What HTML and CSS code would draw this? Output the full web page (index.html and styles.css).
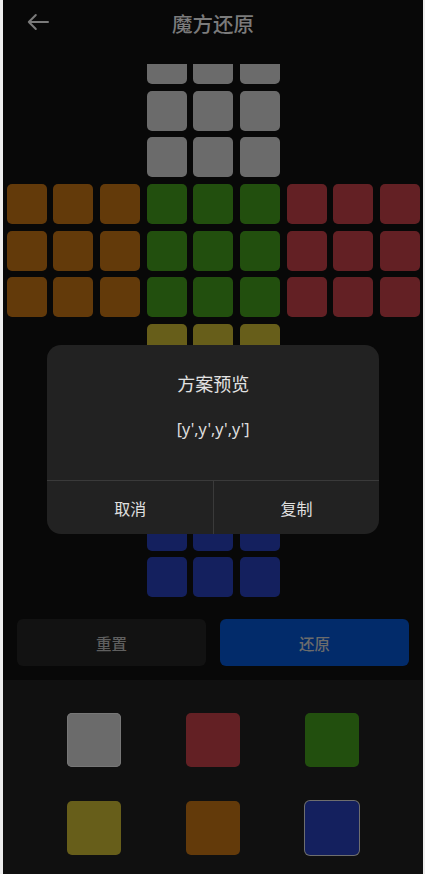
FILE: index.html
```html
<!DOCTYPE html>
<html lang="zh">
<head>
<meta charset="utf-8">
<meta name="viewport" content="width=device-width, initial-scale=1">
<title>魔方还原</title>
<link rel="stylesheet" href="styles.css">
</head>
<body>
<div class="app">
  <header class="header">
    <svg class="back" width="22" height="18" viewBox="0 0 22 18" aria-hidden="true">
      <path d="M1.8 9 H21 M8.8 2 L1.8 9 L8.8 16" fill="none" stroke="#7a7a7a" stroke-width="2" stroke-linecap="round" stroke-linejoin="round"/>
    </svg>
    <h1 class="title">魔方还原</h1>
    <span></span>
  </header>

  <div class="net-view">
    <div class="net">
      <div class="face face-u"><i class="s gray"></i><i class="s gray"></i><i class="s gray"></i><i class="s gray"></i><i class="s gray"></i><i class="s gray"></i><i class="s gray"></i><i class="s gray"></i><i class="s gray"></i></div>
      <div class="face face-l"><i class="s orange"></i><i class="s orange"></i><i class="s orange"></i><i class="s orange"></i><i class="s orange"></i><i class="s orange"></i><i class="s orange"></i><i class="s orange"></i><i class="s orange"></i></div>
      <div class="face face-f"><i class="s green"></i><i class="s green"></i><i class="s green"></i><i class="s green"></i><i class="s green"></i><i class="s green"></i><i class="s green"></i><i class="s green"></i><i class="s green"></i></div>
      <div class="face face-r"><i class="s red"></i><i class="s red"></i><i class="s red"></i><i class="s red"></i><i class="s red"></i><i class="s red"></i><i class="s red"></i><i class="s red"></i><i class="s red"></i></div>
      <div class="face face-d"><i class="s yellow"></i><i class="s yellow"></i><i class="s yellow"></i><i class="s yellow"></i><i class="s yellow"></i><i class="s yellow"></i><i class="s yellow"></i><i class="s yellow"></i><i class="s yellow"></i></div>
      <div class="face face-b"><i class="s blue"></i><i class="s blue"></i><i class="s blue"></i><i class="s blue"></i><i class="s blue"></i><i class="s blue"></i><i class="s blue"></i><i class="s blue"></i><i class="s blue"></i></div>
    </div>
  </div>

  <div class="actions">
    <button class="btn btn-reset">重置</button>
    <button class="btn btn-solve">还原</button>
  </div>

  <div class="palette">
    <i class="swatch gray"></i>
    <i class="swatch red"></i>
    <i class="swatch green"></i>
    <i class="swatch yellow"></i>
    <i class="swatch orange"></i>
    <i class="swatch blue selected"></i>
  </div>

  <div class="dialog">
    <div class="dialog-body">
      <div class="dialog-title">方案预览</div>
      <div class="dialog-text">[y',y',y',y']</div>
    </div>
    <div class="dialog-footer">
      <button class="dialog-btn">取消</button>
      <button class="dialog-btn">复制</button>
    </div>
  </div>
</div>
</body>
</html>
```

FILE: styles.css
```css
* { box-sizing: border-box; }

html, body {
  margin: 0;
  padding: 0;
  background: #eeeeee;
}

body {
  font-family: "Noto Sans CJK SC", "Noto Sans", sans-serif;
}

.app {
  position: relative;
  margin-left: 3px;
  width: 420px;
  height: 874px;
  background: #080808;
  display: flex;
  flex-direction: column;
  overflow: hidden;
}

.header {
  height: 44px;
  flex: none;
  display: grid;
  grid-template-columns: 1fr auto 1fr;
  align-items: center;
}

.back {
  margin-left: 24px;
  display: block;
}

.title {
  margin: 0;
  font-size: 20.5px;
  line-height: 28px;
  font-weight: 500;
  color: #7b7b7b;
  padding-top: 1px;
}

.net-view {
  flex: none;
  margin-top: 20px;
  height: 536.67px;
  overflow: hidden;
}

.net {
  margin-top: -23.33px;
  margin-left: 0.33px;
  display: grid;
  grid-template-columns: repeat(3, 140px);
  grid-template-rows: repeat(4, 140px);
}

.face {
  display: grid;
  grid-template-columns: repeat(3, 40px);
  grid-template-rows: repeat(3, 40px);
  gap: 6.667px;
  padding: 3.333px;
}

.face-u { grid-column: 2; grid-row: 1; }
.face-l { grid-column: 1; grid-row: 2; }
.face-f { grid-column: 2; grid-row: 2; }
.face-r { grid-column: 3; grid-row: 2; }
.face-d { grid-column: 2; grid-row: 3; }
.face-b { grid-column: 2; grid-row: 4; }

.s {
  display: block;
  border-radius: 5px;
}

.gray   { background: #6b6b6b; }
.orange { background: #633a0a; }
.green  { background: #224f0e; }
.red    { background: #632024; }
.yellow { background: #675e1a; }
.blue   { background: #14205e; }

.actions {
  flex: none;
  display: grid;
  grid-template-columns: 1fr 1fr;
  gap: 14px;
  padding: 18.5px 14px 14px;
}

.btn {
  height: 47px;
  border: 0;
  border-radius: 6px;
  font-family: "Noto Sans CJK SC", sans-serif;
  font-size: 15.5px;
  font-weight: 500;
  padding: 0;
}

.btn-reset {
  background: #121212;
  color: #5f5f5f;
}

.btn-solve {
  background: #022b6a;
  color: #6c6c6c;
}

.palette {
  flex: 1;
  background: #101010;
  display: grid;
  grid-template-columns: repeat(3, 119px);
  justify-content: center;
  justify-items: center;
  row-gap: 34px;
  padding-top: 32.7px;
  align-content: start;
}

.swatch {
  display: block;
  width: 54px;
  height: 54px;
  border-radius: 5px;
}

.swatch.gray {
  background: #6b6b6b;
  box-shadow: inset 0 0 0 1px #777;
}

.swatch.selected {
  box-shadow: 0 0 0 1px #6e6e6e;
}

.dialog {
  position: absolute;
  left: 44.3px;
  top: 345px;
  width: 331.7px;
  height: 189.3px;
  background: #222222;
  border-radius: 14px;
  display: flex;
  flex-direction: column;
  overflow: hidden;
}

.dialog-body {
  flex: 1;
  padding-top: 25px;
  text-align: center;
}

.dialog-title {
  font-size: 18px;
  line-height: 26px;
  color: #e2e2e2;
  font-weight: 400;
}

.dialog-text {
  margin-top: 21px;
  font-family: "Noto Sans", "Roboto", sans-serif;
  font-size: 16px;
  line-height: 24px;
  color: #dddddd;
}

.dialog-footer {
  flex: none;
  height: 54px;
  border-top: 1px solid #3a3a3a;
  display: grid;
  grid-template-columns: 1fr 1fr;
}

.dialog-btn {
  border: 0;
  background: transparent;
  color: #e0e0e0;
  font-family: "Noto Sans CJK SC", sans-serif;
  font-size: 16px;
  font-weight: 400;
  padding: 0;
}

.dialog-btn + .dialog-btn {
  border-left: 1px solid #3a3a3a;
}
```
